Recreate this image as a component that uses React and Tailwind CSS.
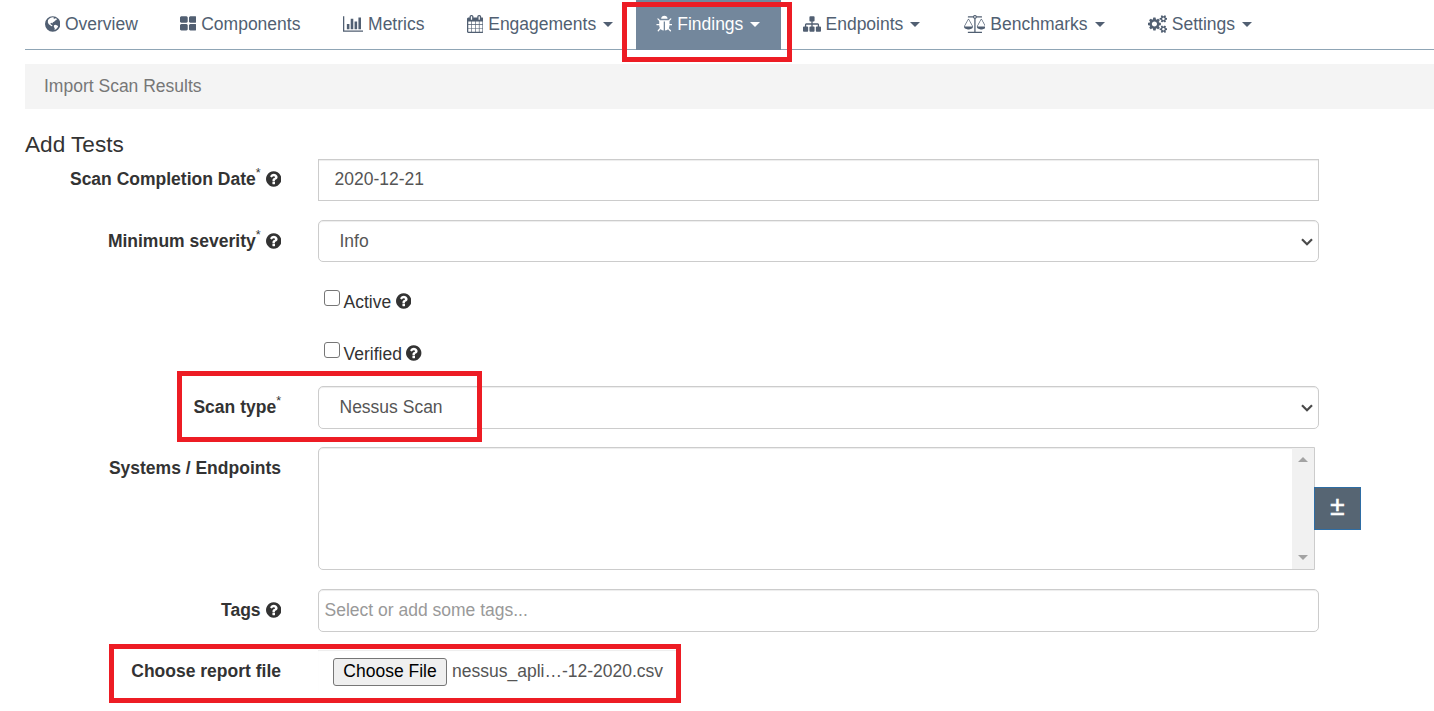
import React from "react";

const ICONS = {
  globe: {
    w: 1536,
    d: "M768 128a768 768 0 1 0 0 1536a768 768 0 1 0 0 -1536zM560 270l180 -50l150 30l-40 100l100 30l80 -60l150 50l-30 120l-130 60l-110 120l-120 40l-60 130l-110 -60l-80 50l50 110l110 50l50 110l-90 30l-150 -110l-150 -120l-80 -190l20 -200l120 -130zM900 1010l150 -40l170 70l90 80l-90 180l-140 130l-130 60l20 -160l-80 -130l-10 -110z",
  },
  thLarge: {
    w: 1664,
    d: "M768 1024v384q0 52-38 90t-90 38h-512q-52 0-90-38t-38-90v-384q0-52 38-90t90-38h512q52 0 90 38t38 90zm0-768v384q0 52-38 90t-90 38h-512q-52 0-90-38t-38-90v-384q0-52 38-90t90-38h512q52 0 90 38t38 90zm896 768v384q0 52-38 90t-90 38h-512q-52 0-90-38t-38-90v-384q0-52 38-90t90-38h512q52 0 90 38t38 90zm0-768v384q0 52-38 90t-90 38h-512q-52 0-90-38t-38-90v-384q0-52 38-90t90-38h512q52 0 90 38t38 90z",
  },
  chart: {
    w: 2048,
    d: "M640 896v512h-256v-512h256zm384-512v1024h-256v-1024h256zm1024 1152v128h-2048v-1536h128v1408h1920zm-640-896v768h-256v-768h256zm384-384v1152h-256v-1152h256z",
  },
  calendar: {
    w: 1664,
    d: "M128 1664h288v-288h-288v288zm352 0h320v-288h-320v288zm-352-352h288v-320h-288v320zm352 0h320v-320h-320v320zm-352-384h288v-288h-288v288zm736 736h320v-288h-320v288zm-384-736h320v-288h-320v288zm768 736h288v-288h-288v288zm-384-352h320v-320h-320v320zm-352-864v-288q0-13-9.5-22.5t-22.5-9.5h-64q-13 0-22.5 9.5t-9.5 22.5v288q0 13 9.5 22.5t22.5 9.5h64q13 0 22.5-9.5t9.5-22.5zm736 864h288v-320h-288v320zm-384-384h320v-288h-320v288zm384 0h288v-288h-288v288zm32-480v-288q0-13-9.5-22.5t-22.5-9.5h-64q-13 0-22.5 9.5t-9.5 22.5v288q0 13 9.5 22.5t22.5 9.5h64q13 0 22.5-9.5t9.5-22.5zm384-64v1280q0 52-38 90t-90 38h-1408q-52 0-90-38t-38-90v-1280q0-52 38-90t90-38h128v-96q0-66 47-113t113-47h64q66 0 113 47t47 113v96h384v-96q0-66 47-113t113-47h64q66 0 113 47t47 113v96h128q52 0 90 38t38 90z",
  },
  bug: {
    w: 1664,
    d: "M1632 960q0 26-19 45t-45 19h-224q0 171-67 290l208 209q19 19 19 45t-19 45q-18 19-45 19t-45-19l-198-197q-5 5-15 13t-42 28.5-65 36.5-82 29-97 13v-896h-128v896q-51 0-101.5-13.5t-87-33-66-39-43.5-32.5l-15-14-183 207q-20 21-48 21-24 0-43-16-19-18-20.5-44.5t15.5-46.5l202-227q-58-114-58-274h-224q-26 0-45-19t-19-45 19-45 45-19h224v-294l-173-173q-19-19-19-45t19-45 45-19 45 19l173 173h844l173-173q19-19 45-19t45 19 19 45-19 45l-173 173v294h224q26 0 45 19t19 45zm-480-576h-640q0-133 93.5-226.5t226.5-93.5 226.5 93.5 93.5 226.5z",
  },
  sitemap: {
    w: 1792,
    d: "M1792 1248v320q0 40-28 68t-68 28h-320q-40 0-68-28t-28-68v-320q0-40 28-68t68-28h96v-192h-512v192h96q40 0 68 28t28 68v320q0 40-28 68t-68 28h-320q-40 0-68-28t-28-68v-320q0-40 28-68t68-28h96v-192h-512v192h96q40 0 68 28t28 68v320q0 40-28 68t-68 28h-320q-40 0-68-28t-28-68v-320q0-40 28-68t68-28h96v-192q0-52 38-90t90-38h512v-192h-96q-40 0-68-28t-28-68v-320q0-40 28-68t68-28h320q40 0 68 28t28 68v320q0 40-28 68t-68 28h-96v192h512q52 0 90 38t38 90v192h96q40 0 68 28t28 68z",
  },
  scale: {
    w: 2176,
    d: "M1728 448l-384 704h768zm-1280 0l-384 704h768zm821-192q-14 40-45.5 71.5t-71.5 45.5v1291h608q14 0 23 9t9 23v64q0 14-9 23t-23 9h-1344q-14 0-23-9t-9-23v-64q0-14 9-23t23-9h608v-1291q-40-14-71.5-45.5t-45.5-71.5h-491q-14 0-23-9t-9-23v-64q0-14 9-23t23-9h491q21-57 70-92.5t111-35.5 111 35.5 70 92.5h491q14 0 23 9t9 23v64q0 14-9 23t-23 9h-491zm-181 16q33 0 56.5-23.5t23.5-56.5-23.5-56.5-56.5-23.5-56.5 23.5-23.5 56.5 23.5 56.5 56.5 23.5zm1088 880q0 73-46.5 131t-117.5 91-144.5 49.5-139.5 16.5-139.5-16.5-144.5-49.5-117.5-91-46.5-131q0-11 35-81t92-174.5 107-195.5 102-184 56-100q18-33 56-33t56 33q4 7 56 100t102 184 107 195.5 92 174.5 35 81zm-1280 0q0 73-46.5 131t-117.5 91-144.5 49.5-139.5 16.5-139.5-16.5-144.5-49.5-117.5-91-46.5-131q0-11 35-81t92-174.5 107-195.5 102-184 56-100q18-33 56-33t56 33q4 7 56 100t102 184 107 195.5 92 174.5 35 81z",
  },
  cogs: {
    w: 1920,
    d: "M896 896q0-106-75-181t-181-75-181 75-75 181 75 181 181 75 181-75 75-181zm768 512q0-52-38-90t-90-38-90 38-38 90q0 53 37.5 90.5t90.5 37.5 90.5-37.5 37.5-90.5zm0-1024q0-52-38-90t-90-38-90 38-38 90q0 53 37.5 90.5t90.5 37.5 90.5-37.5 37.5-90.5zm-384 421v185q0 10-7 19.5t-16 10.5l-155 24q-11 35-32 76 34 48 90 115 7 11 7 20 0 12-7 19-23 30-82.5 89.5t-78.5 59.5q-11 0-21-7l-115-90q-37 19-77 31-11 108-23 155-7 24-30 24h-186q-11 0-20-7.5t-10-17.5l-23-153q-34-10-75-31l-118 89q-7 7-20 7-11 0-21-8-144-133-144-160 0-9 7-19 10-14 41-53t47-61q-23-44-35-82l-152-24q-10-1-17-9.5t-7-19.5v-185q0-10 7-19.5t16-10.5l155-24q11-35 32-76-34-48-90-115-7-11-7-20 0-12 7-20 22-30 82-89t79-59q11 0 21 7l115 90q34-18 77-32 11-108 23-154 7-24 30-24h186q11 0 20 7.5t10 17.5l23 153q34 10 75 31l118-89q8-7 20-7 11 0 21 8 144 133 144 160 0 8-7 19-12 16-42 54t-45 60q23 48 34 82l152 23q10 2 17 10.5t7 19.5zm640 533v140q0 16-149 31-12 27-30 52 51 113 51 138 0 4-4 7-122 71-124 71-8 0-46-47t-52-68q-20 2-30 2t-30-2q-14 21-52 68t-46 47q-2 0-124-71-4-3-4-7 0-25 51-138-18-25-30-52-149-15-149-31v-140q0-16 149-31 13-29 30-52-51-113-51-138 0-4 4-7 4-2 35-20t59-34 30-16q8 0 46 46.5t52 67.5q20-2 30-2t30 2q51-71 92-112l6-2q4 0 124 70 4 3 4 7 0 25-51 138 17 23 30 52 149 15 149 31zm0-1024v140q0 16-149 31-12 27-30 52 51 113 51 138 0 4-4 7-122 71-124 71-8 0-46-47t-52-68q-20 2-30 2t-30-2q-14 21-52 68t-46 47q-2 0-124-71-4-3-4-7 0-25 51-138-18-25-30-52-149-15-149-31v-140q0-16 149-31 13-29 30-52-51-113-51-138 0-4 4-7 4-2 35-20t59-34 30-16q8 0 46 46.5t52 67.5q20-2 30-2t30 2q51-71 92-112l6-2q4 0 124 70 4 3 4 7 0 25-51 138 17 23 30 52 149 15 149 31z",
  },
  question: {
    w: 1536,
    d: "M896 1376v-192q0-14-9-23t-23-9h-192q-14 0-23 9t-9 23v192q0 14 9 23t23 9h192q14 0 23-9t9-23zm256-672q0-88-55.5-163t-138.5-116-170-41q-243 0-371 213-15 24 8 42l132 100q7 6 19 6 16 0 25-12 53-68 86-92 34-24 86-24 48 0 85.5 26t37.5 59q0 38-20 61t-68 45q-63 28-115.5 86.5t-52.5 125.5v36q0 14 9 23t23 9h192q14 0 23-9t9-23q0-19 21.5-49.5t54.5-49.5q32-18 49-28.5t46-35 44.5-48 28-60.5 12.5-81zm384 192q0 209-103 385.5t-279.5 279.5-385.5 103-385.5-103-279.5-279.5-103-385.5 103-385.5 279.5-279.5 385.5-103 385.5 103 279.5 279.5 103 385.5z",
  },
};

function Icon({ name, className = "" }) {
  const icon = ICONS[name];
  return (
    <svg
      viewBox={`0 0 ${icon.w} 1792`}
      className={`h-[18px] w-auto shrink-0 ${className}`}
      fill="currentColor"
      fillRule={name === "globe" ? "evenodd" : "nonzero"}
      aria-hidden="true"
    >
      <path d={icon.d} />
    </svg>
  );
}

const NAV = [
  { label: "Overview", icon: "globe", width: "w-[135px]" },
  { label: "Components", icon: "thLarge", width: "w-[163px]" },
  { label: "Metrics", icon: "chart", width: "w-[124px]" },
  { label: "Engagements", icon: "calendar", width: "w-[189px]", menu: true },
  { label: "Findings", icon: "bug", width: "w-[145px]", menu: true, active: true },
  { label: "Endpoints", icon: "sitemap", width: "w-[161px] ml-[2px]", menu: true },
  { label: "Benchmarks", icon: "scale", width: "w-[184px]", menu: true },
  { label: "Settings", icon: "cogs", width: "w-[145px]", menu: true },
];

function NavItem({ label, icon, width, menu, active }) {
  return (
    <li
      className={`flex items-center pl-[19.5px] ${width} ${
        active ? "relative h-[50px] bg-[#73879c] pb-[2px] text-white" : "h-[49px] pb-px"
      }`}
    >
      <a className="flex items-center whitespace-nowrap">
        <Icon name={icon} className="-mt-px" />
        <span className="ml-[5px]">{label}</span>
        {menu && (
          <span className="ml-[7px] mt-px h-0 w-0 border-x-[5px] border-t-[5px] border-x-transparent border-t-current" />
        )}
      </a>
    </li>
  );
}

function Row({ label, required, help, className = "", labelHeight = "h-[41px]", children }) {
  return (
    <div className={`flex items-start ${className}`}>
      <div className={`flex w-[256px] shrink-0 items-center justify-end whitespace-nowrap font-bold ${labelHeight}`}>
        {label}
        {required && <span className="relative -top-[6px] text-[12.5px] leading-none font-normal">*</span>}
        {help && <Icon name="question" className="ml-[5px] -mt-px" />}
      </div>
      <div className="ml-[37px]">{children}</div>
    </div>
  );
}

function Chevron() {
  return (
    <svg viewBox="0 0 12 8" className="mt-px h-[8px] w-[12px]" fill="none" stroke="#4a4a4a" strokeWidth="2.2" aria-hidden="true">
      <path d="M1 1.2l5 5l5 -5" />
    </svg>
  );
}

function Select({ value, className = "" }) {
  return (
    <div
      className={`flex w-[1001px] items-center justify-between rounded-[5px] border border-[#ccc] pl-[20.5px] pr-[5px] text-[#555] shadow-[inset_0_1px_1px_rgba(0,0,0,0.075)] ${className}`}
    >
      <span>{value}</span>
      <Chevron />
    </div>
  );
}

function Check({ label }) {
  return (
    <label className="ml-[299px] flex items-center">
      <span className="mb-[7px] h-[16px] w-[16px] rounded-[3px] border border-[#767676] bg-white" />
      <span className="ml-[3.5px] mt-px -mb-px">{label}</span>
      <Icon name="question" className="ml-[4.5px] -mt-px" />
    </label>
  );
}

export default function App() {
  return (
    <div className="relative h-[711px] w-[1434px] overflow-hidden bg-white pl-[25px] font-['Liberation_Sans',Arial,sans-serif] text-[17.5px] leading-[25px] text-[#333]">
      <ul className="flex h-[50px] border-b border-[#8fa5b5] text-[#515f72]">
        {NAV.map((item) => (
          <NavItem key={item.label} {...item} />
        ))}
      </ul>

      <div className="mt-[14px] flex h-[45px] items-center bg-[#f4f4f4] pl-[19px] pb-px text-[#777]">
        Import Scan Results
      </div>

      <h3 className="mt-[22px] h-[28px] text-[22.6px] leading-[27px]">Add Tests</h3>

      <form>
        <Row label="Scan Completion Date" required help labelHeight="h-[40px]">
          <div className="flex h-[42px] w-[1001px] items-center border border-[#ccc] pl-[15.5px] pb-px text-[#555] shadow-[inset_0_1px_1px_rgba(0,0,0,0.075)]">
            2020-12-21
          </div>
        </Row>
        <Row label="Minimum severity" required help className="mt-[19px]" labelHeight="h-[42px]">
          <Select value="Info" className="h-[42px]" />
        </Row>
        <div className="mt-[27px] flex h-[97px] flex-col gap-[27px]">
          <Check label="Active" />
          <Check label="Verified" />
        </div>
        <Row label="Scan type" required labelHeight="h-[42px]">
          <Select value="Nessus Scan" className="h-[43px] pb-px" />
        </Row>
        <Row label="Systems / Endpoints" className="mt-[18px]" labelHeight="h-[42px]">
          <div className="flex items-start">
            <div className="flex h-[123px] w-[997px] justify-end rounded-l-[5px] border border-[#ccc] shadow-[inset_0_1px_1px_rgba(0,0,0,0.075)]">
              <div className="flex w-[22px] flex-col items-center justify-between bg-[#f1f1f1] py-[9px]">
                <span className="h-0 w-0 border-x-[5px] border-b-[5px] border-x-transparent border-b-[#a3a3a3]" />
                <span className="h-0 w-0 border-x-[5px] border-t-[5px] border-x-transparent border-t-[#a3a3a3]" />
              </div>
            </div>
            <button
              type="button"
              className="relative -ml-px mt-[40px] flex h-[43px] w-[47px] items-center justify-center border border-[#2e6da4] bg-[#566573] pb-[5px] text-[26px] text-white [-webkit-text-stroke:0.6px_white]"
            >
              ±
            </button>
          </div>
        </Row>
        <Row label="Tags" help className="mt-[19px]" labelHeight="h-[42px]">
          <div className="flex h-[43px] w-[1001px] items-center rounded-[5px] border border-[#ccc] pl-[5.5px] pb-px text-[#999] shadow-[inset_0_1px_1px_rgba(0,0,0,0.075)]">
            Select or add some tags...
          </div>
        </Row>
        <Row label="Choose report file" className="mt-[18px]" labelHeight="h-[42px]">
          <div className="flex h-[43px] w-[359px] items-center pl-[15px] text-[#555] shadow-[inset_0_1px_1px_rgba(0,0,0,0.075)]">
            <button
              type="button"
              className="flex h-[28px] w-[114px] items-center justify-center whitespace-nowrap rounded-[3px] border border-[#767676] bg-[#efefef] text-black"
            >
              Choose File
            </button>
            <span className="ml-[5px] whitespace-nowrap">nessus_apli…-12-2020.csv</span>
          </div>
        </Row>
      </form>

      <div className="pointer-events-none absolute left-[622px] top-[2px] h-[60px] w-[170px] border-[5px] border-[#ed1c24]" />
      <div className="pointer-events-none absolute left-[177px] top-[371px] h-[71px] w-[305px] border-[5px] border-[#ed1c24]" />
      <div className="pointer-events-none absolute left-[109px] top-[644px] h-[59px] w-[572px] border-[5px] border-[#ed1c24]" />
    </div>
  );
}
